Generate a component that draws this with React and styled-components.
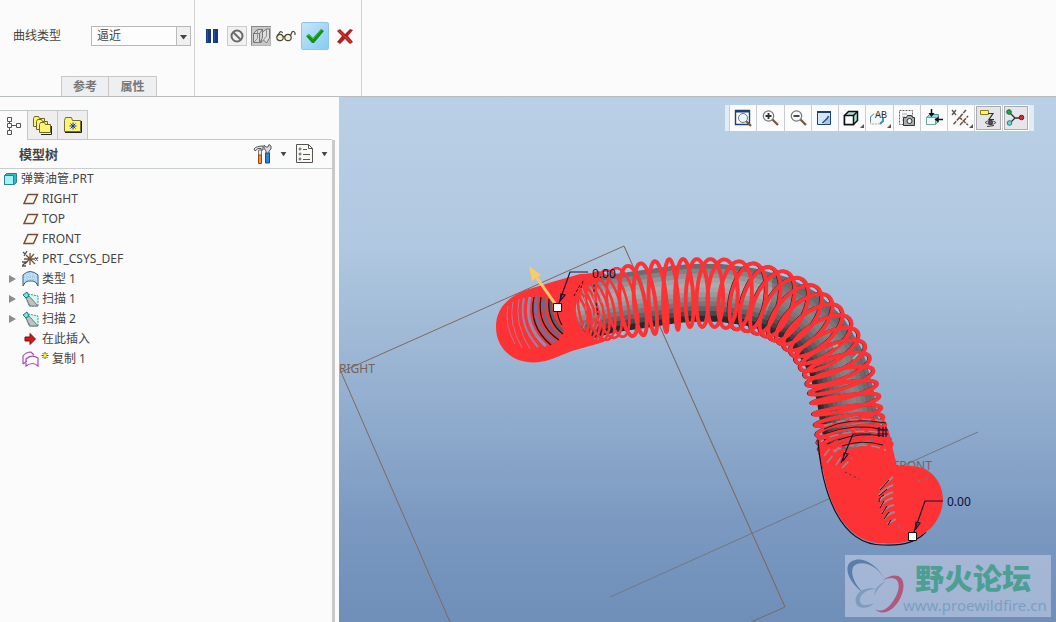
import React from 'react'
import styled, { createGlobalStyle, css } from 'styled-components'

const GlobalStyle = createGlobalStyle`
  *, *::before, *::after {
    box-sizing: border-box;
  }

  body {
    margin: 0;
    background: #fbfbfb;
    color: #444;
    font-family: 'Noto Sans', 'Noto Sans CJK SC', sans-serif;
    font-size: 12px;
    line-height: 20px;
  }

  button, select {
    color: inherit;
    font: inherit;
  }

  svg {
    display: block;
  }
`

const Page = styled.div`
  display: flex;
  flex-direction: column;
  min-height: 100vh;
`

/* dashboard */

const Dashboard = styled.header`
  display: flex;
  height: 97px;
  border-bottom: 1px solid #b9bcbc;
`

const Section = styled.section`
  display: flex;
  flex-direction: column;
  justify-content: space-between;
  border-right: 1px solid #d2d2d2;
`

const Field = styled.div`
  display: flex;
  align-items: center;
  gap: 30px;
  padding: 26px 3px 0 13px;
`

const SelectBox = styled.span`
  display: flex;
  position: relative;

  svg {
    position: absolute;
    top: 1px;
    right: 1px;
    pointer-events: none;
  }
`

const Select = styled.select`
  appearance: none;
  width: 100px;
  height: 20px;
  padding: 0 20px 0 5px;
  border: 1px solid #b8b8b8;
  border-radius: 0;
  background: #fdfdfd;
  line-height: 18px;
`

const SlideTabs = styled.nav`
  display: flex;
  padding-left: 61px;
`

const SlideTab = styled.button`
  width: 48px;
  height: 20px;
  padding: 0;
  border: 1px solid #c6c8ca;
  border-bottom: 0;
  background: #eeeff1;
  color: #76787a;
  font-weight: 700;
  line-height: 18px;

  & + & {
    border-left-width: 0;
  }
`

const Actions = styled.div`
  display: flex;
  align-items: center;
  gap: 4px;
  padding: 22px 4px 0 6px;
`

const Action = styled.button`
  display: grid;
  place-items: center;
  width: ${({ $size }) => $size || 20}px;
  height: ${({ $size }) => $size || 20}px;
  padding: 0;
  border: 1px solid transparent;
  background: none;

  ${({ $look }) =>
    $look === 'raised' &&
    css`
      border-color: #cbcbcb;
      background: #f1f1f1;
    `}
  ${({ $look }) =>
    $look === 'pressed' &&
    css`
      border-color: #8a8a8a #b4b4b4 #b4b4b4 #8a8a8a;
      background: #c9c9c9;
    `}
  ${({ $look }) =>
    $look === 'hot' &&
    css`
      border-color: #8fc6e8;
      border-radius: 2px;
      background: linear-gradient(135deg, #c8e6f8, #86cbf5);
    `}
`

/* navigator */

const Workspace = styled.main`
  display: grid;
  flex: 1;
  grid-template-columns: 339px minmax(0, 1fr);
`

const Navigator = styled.aside`
  display: flex;
  flex-direction: column;
  padding: 13px 4px 0 0;
`

const NavTabs = styled.nav`
  display: flex;
  height: 30px;
  border-bottom: 1px solid #c5c8c8;
  margin-right: 3px;
`

const NavTab = styled.button`
  display: grid;
  place-items: center;
  width: ${({ $active }) => ($active ? 28 : 30)}px;
  height: ${({ $active }) => ($active ? 30 : 29)}px;
  padding: 0;
  border: 1px solid #c5c8c8;
  border-width: 1px 1px 0 0;
  background: ${({ $active }) => ($active ? '#fbfbfb' : '#eeeeef')};
`

const NavBody = styled.div`
  flex: 1;
  border-right: 3px solid #c9c9c9;
`

const TreeHeader = styled.div`
  display: flex;
  align-items: center;
  height: 29px;
  padding: 0 4px 0 19px;
  border-bottom: 1px solid #c8cdcd;
`

const TreeTitle = styled.h2`
  flex: 1;
  margin: 0;
  font-size: 13px;
  font-weight: 700;
`

const MenuButton = styled.button`
  display: flex;
  align-items: center;
  gap: 8px;
  padding: 0;
  margin-left: 9px;
  border: 0;
  background: none;
`

const Tree = styled.ul`
  margin: 0;
  padding: 0;
  list-style: none;
`

const TreeItem = styled.li`
  display: flex;
  align-items: center;
  gap: 3px;
  height: 20px;
  padding-left: ${({ $root }) => ($root ? 3 : 7)}px;
`

const Twisty = styled.span`
  width: 12px;
  color: #8d8d8d;
`

/* graphics area */

const Viewport = styled.section`
  position: relative;
  min-height: 525px;
  overflow: hidden;
  background: linear-gradient(#b9d0e6 0%, #b0c8e0 28%, #97b2d1 54%, #7a98c0 82%, #6f8fb8 100%);
`

const Scene = styled.svg`
  position: absolute;
  width: 100%;
  height: 100%;
`

const ViewBar = styled.div`
  position: absolute;
  top: 8px;
  right: 22px;
  display: flex;
  width: 309px;
  height: 26px;
  padding: 0 5px 0 4px;
  background: #e3ebf3;
`

const ViewButton = styled.button`
  display: grid;
  flex: 1;
  place-items: center;
  min-width: 0;
  height: 26px;
  padding: 0;
  border: 0;
  border-left: 1px solid #c9cdd2;
  background: #fcfcfc;

  ${({ $on }) =>
    $on &&
    css`
      background: #e4e6ea;
      box-shadow: inset 0 0 0 1px #fff, inset 0 0 0 2px #a9abb0;
    `}
`

const Watermark = styled.a`
  position: absolute;
  right: 5px;
  bottom: 5px;
  display: flex;
  align-items: center;
  width: 206px;
  height: 62px;
  background: rgba(190, 200, 226, 0.66);
  color: #789fc0;
  text-decoration: none;
`

const WatermarkText = styled.span`
  display: flex;
  flex-direction: column;
  margin-left: -4px;
  font-size: 15px;
  line-height: 18px;

  strong {
    padding-left: 12px;
    color: #4d9f93;
    font-family: 'Noto Sans CJK SC', sans-serif;
    font-size: 29px;
    font-weight: 900;
    line-height: 38px;
  }
`

/* icons */

const Caret = () => (
  <svg width="7" height="5" viewBox="0 0 7 5">
    <path d="M1 0h5L3.500 4z" fill="#444" stroke="#444" strokeWidth=".5" />
  </svg>
)

const PauseIcon = () => (
  <svg width="12" height="14" viewBox="0 0 12 14">
    <path d="M0 0h5v14H0zM7 0h5v14H7z" fill="#163a80" />
    <path d="M1 1h1v12H1zM8 1h1v12H8z" fill="#2c539a" />
  </svg>
)

const NoneIcon = () => (
  <svg width="14" height="14" viewBox="0 0 14 14" fill="none" stroke="#6a6a6a" strokeWidth="2">
    <circle cx="7" cy="7" r="5.500" />
    <path d="M3.500 3.500l7 7" />
  </svg>
)

const AttachedIcon = () => (
  <svg width="18" height="18" viewBox="0 0 18 18" fill="none" stroke="#777">
    <path d="M1.500 6.500l4-4h5l-3 4v9h-6zM7.500 6.500h-6M7.500 15.500l3-4v-9" fill="#d9d9d9" />
    <path d="M10.500 5l4-3h3v9l-3 5-3-3-3 3 2-6z" fill="#dedede" />
    <path d="M5.500 2.500v9l-4 4M14.500 2v7l-3 4" stroke="#929292" />
  </svg>
)

const GlassesIcon = () => (
  <svg width="20" height="12" viewBox="0 0 20 12" fill="none" stroke="#4a4638" strokeWidth="1.200">
    <circle cx="4" cy="7.500" r="3.200" fill="#f6f1dc" />
    <circle cx="12" cy="7.500" r="3.200" fill="#f6f1dc" />
    <path d="M7 7q1-1.500 2 0M1 6.500L4 2q1.500-1 2.500 1M14.500 5.500L16 2q2-1.500 3 1v2" />
  </svg>
)

const CheckIcon = () => (
  <svg width="18" height="14" viewBox="0 0 18 14">
    <path d="M0 7l3-2 4 4 8-9 3 2L8 14H6z" fill="#12921c" />
    <path d="M1 7l2-1 4 4 8-9" fill="none" stroke="#3dbb3d" />
  </svg>
)

const CancelIcon = () => (
  <svg width="16" height="15" viewBox="0 0 16 15">
    <path d="M0 2l3-2 5 5 5-5 3 1-5 6 5 6-3 2-5-5-5 5-3-2 5-6z" fill="#b3201c" />
    <path d="M2 2l12 11" stroke="#dc4a3d" />
  </svg>
)

const StructureIcon = () => (
  <svg width="14" height="20" viewBox="0 0 14 20" fill="none" stroke="#555">
    <path d="M.5 1.500h4v4h-4zM.5 7.500h4v4h-4zM.5 14.500h4v4h-4zM9.500 7.500h4v4h-4zM2.500 5.500v2M2.500 11.500v3M4.500 9.500h5" />
  </svg>
)

const FoldersIcon = () => (
  <svg width="19" height="20" viewBox="0 0 19 20" fill="#fdf47a" stroke="#6e6624">
    {[0, 3, 6].map((d) => (
      <path key={d} d="M.5 2.500l1-2h4l1 2h5v8H.5z" transform={`translate(${d} ${d + 1})`} />
    ))}
    <path d="M18.500 11v8.500H8" fill="none" stroke="#222" />
  </svg>
)

const FavoriteIcon = () => (
  <svg width="18" height="16" viewBox="0 0 18 16">
    <path d="M.5 3.500l1-3h6l1 3h8v11H.5z" fill="#fdf47a" stroke="#77702c" />
    <path d="M17.500 4v11.500H1" fill="none" stroke="#222" />
    <path d="M9 5.500v7M5.500 9h7M6.500 6.500l5 5M11.500 6.500l-5 5" stroke="#1b3aa0" />
  </svg>
)

const ToolsIcon = () => (
  <svg width="19" height="20" viewBox="0 0 19 20">
    <path d="M1 5q2-3 9-3v4H8V4.500H5L2 7z" fill="#d4e2e8" stroke="#555" />
    <path d="M5.500 6h3v6h-3z" fill="#e8e8e8" stroke="#777" />
    <path d="M5.500 11h3v8.500h-3z" fill="#f0953a" stroke="#8b4a18" />
    <path d="M11 4V1l2 2h2l1-2.500L18 2v3l-2 2v3h-3V7z" fill="#d5dde2" stroke="#555" />
    <path d="M12.500 9h4v10h-4z" fill="#2f83d0" stroke="#174b8a" />
  </svg>
)

const SettingsListIcon = () => (
  <svg width="17" height="20" viewBox="0 0 17 20" fill="none" stroke="#555">
    <path d="M.5.5h12l4 4v14H.5zM12.500.5v4h4" fill="#fbfbf4" />
    <circle cx="4" cy="5" r="1" />
    <circle cx="4" cy="10" r="1" />
    <circle cx="4" cy="15" r="1" />
    <path d="M7 5.500h4M7 10.500h7M7 15.500h7" />
  </svg>
)

const PartIcon = () => (
  <svg width="15" height="14" viewBox="0 0 15 14" stroke="#347f8a">
    <path d="M1.500 3.500l2-2h10v9l-2 2h-10z" fill="#36b5c0" />
    <path d="M1.500 3.500h9v9h-9z" fill="#9cf6f8" />
  </svg>
)

const PlaneIcon = () => (
  <svg width="17" height="12" viewBox="0 0 17 12">
    <path d="M6 1.500h9.500l-4 9H2z" fill="#fffaf0" stroke="#7a4c35" strokeWidth="1.500" />
  </svg>
)

const CsysIcon = () => (
  <svg width="17" height="16" viewBox="0 0 17 16" fill="none" stroke="#7a5038" strokeWidth="1.300">
    <path d="M2 8h11M8 2v12M4 4l9 9M12 3l-9 10" />
    <path d="M13 6.500l3 3M16 6.500l-3 3M1 1l2 2M5 0L2 5M0 11h4l-4 4h4" stroke="#555" />
  </svg>
)

const QuiltIcon = () => (
  <svg width="17" height="16" viewBox="0 0 17 16">
    <path d="M1 4q7-7 15 0v11q-2-5-5-5H6q-3 0-5 5z" fill="#bfe1fa" stroke="#39577a" />
    <path d="M5 3v7M8 2v8M11 2v8M2 6h13M3 9h11" stroke="#8fbfe6" strokeDasharray="1 1" />
  </svg>
)

const SweepIcon = () => (
  <svg width="17" height="16" viewBox="0 0 17 16" strokeLinejoin="round">
    <path d="M6 3l10 2v10H7L4 7z" fill="#d5f7f2" stroke="#4c8a86" strokeDasharray="2 1" />
    <path d="M4 7l3-2 9 10H8z" fill="#bdc3c3" stroke="#777" />
    <path d="M1 4l4-3 2 4-3 2z" fill="#70e7d8" stroke="#16847d" />
  </svg>
)

const InsertIcon = () => (
  <svg width="17" height="14" viewBox="0 0 17 14">
    <path d="M3 5h5V1.500L13.500 7 8 12.500V9H3z" fill="#cc1919" stroke="#7c1111" />
  </svg>
)

const CopyIcon = () => (
  <svg width="27" height="16" viewBox="0 0 27 16" fill="none">
    <path d="M1 13V5q3-4 8-4l3 3M1 13l4-3M4 15V8q5-5 12-1v8q-5-5-12 0z" stroke="#a34bc0" strokeWidth="1.200" />
    <path d="M23 1v7M19.500 4.500h7M20.500 2l5 5M25.500 2l-5 5" stroke="#55551a" />
    <path d="M21.500 3h3v3h-3z" fill="#f5ee1c" />
  </svg>
)

const ViewIcon = ({ children, more }) => (
  <svg width="26" height="26" viewBox="0 0 26 26" fill="none" stroke="#333">
    {children}
    {more && <path d="M25 19v4h-4z" fill="#555" stroke="none" />}
  </svg>
)

const Magnifier = ({ sign }) => (
  <>
    <path d="M15 14l6 6" stroke="#79543f" strokeWidth="2.200" />
    <circle cx="11.500" cy="11" r="5.200" fill="#f7fafc" stroke="#777" strokeWidth="1.200" />
    {sign && <path d={sign} strokeWidth="1.800" />}
  </>
)

const viewTools = [
  {
    name: 'Refit',
    icon: (
      <>
        <path d="M5.500 5.500h14v14h-14z" stroke="#1c4172" strokeWidth="1.400" />
        <path d="M5 6.500h15" stroke="#1c4172" strokeWidth="2" />
        <path d="M16 16l5 5" stroke="#79543f" strokeWidth="2.200" />
        <circle cx="13" cy="13" r="4.500" fill="#eef4fa" stroke="#777" />
      </>
    ),
  },
  { name: 'Zoom in', icon: <Magnifier sign="M8.500 11h6M11.500 8v6" /> },
  { name: 'Zoom out', icon: <Magnifier sign="M8.500 11h6" /> },
  {
    name: 'Repaint',
    icon: (
      <>
        <path d="M5.500 6.500h13v13h-13z" fill="#d3e7f8" stroke="#1c4172" />
        <path d="M5 7h14" stroke="#1c4172" strokeWidth="2" />
        <path d="M18 11q-4 2-6 8h6z" fill="#a5c8ea" stroke="none" />
        <path d="M16.500 11q-1 3-4 5l-2 2" stroke="#344c72" strokeWidth="1.500" />
      </>
    ),
  },
  {
    name: 'Display style',
    more: true,
    icon: (
      <>
        <path d="M5.500 10.500l4-4h9v9l-4 4h-9z" fill="#a9dfd6" stroke="#111" strokeWidth="1.500" />
        <path d="M5.500 10.500h9v9h-9z" fill="#fff" stroke="#111" strokeWidth="1.500" />
        <path d="M14.500 10.500l4-4" stroke="#111" strokeWidth="1.500" />
      </>
    ),
  },
  {
    name: 'Saved orientations',
    more: true,
    icon: (
      <>
        <path d="M4.500 12l3-3h9v6l-3 4h-9z" fill="#f4f7f8" stroke="#aaa" strokeDasharray="2 1" />
        <path d="M14 19l3-3v-3" stroke="#3a9ca2" strokeWidth="2" />
        <path d="M4.500 17v-5l3-3" stroke="#5d8d90" />
        <text x="9" y="13" fill="#333" stroke="none" fontSize="10" fontFamily="Liberation Mono, monospace">
          AB
        </text>
      </>
    ),
  },
  {
    name: 'View manager',
    icon: (
      <>
        <path d="M5.500 5.500h13v14h-13z" fill="#f7f7f7" strokeDasharray="2 1" stroke="#666" />
        <path d="M8 9h5M8 12h3M8 15h2" stroke="#aaa" />
        <path d="M9.500 12.500h3l1-2h4l1 2h2v8h-11z" fill="#a8adaf" />
        <circle cx="15.500" cy="16" r="2.500" fill="#f1f1f1" />
      </>
    ),
  },
  {
    name: 'View normal',
    icon: (
      <>
        <path d="M5.500 12.500l3-3h9v7l-3 3h-9z" fill="#8fdcdc" stroke="#528e91" />
        <path d="M5.500 12.500h9v7h-9z" fill="#eef9f7" stroke="#6fa5a5" />
        <path d="M10.500 4v6M22 14.500h-6" stroke="#111" strokeWidth="1.500" />
        <path d="M7.500 8h6l-3 4zM17.500 11.500v6l-4-3z" fill="#111" stroke="none" />
      </>
    ),
  },
  {
    name: 'Datum display',
    more: true,
    icon: (
      <>
        <path d="M4 5l4 5M8 5l-4 5" stroke="#555" strokeWidth="1.300" />
        <path d="M18 5L5 20M11 12l9 8M12 20l8-9" stroke="#6f5140" strokeWidth="1.500" strokeDasharray="4 1" />
      </>
    ),
  },
  {
    name: 'Annotation display',
    on: true,
    icon: (
      <>
        <path d="M4.500 5.500h8v4h-8z" fill="#fff46a" stroke="#8c8022" />
        <path d="M12 8.500h5l-4 6h5" stroke="#333" strokeWidth="1.200" />
        <path d="M9 17.500q5-4 11 0-5 4-11 0z" fill="#ddd" stroke="#555" />
        <circle cx="14.500" cy="17.500" r="2" fill="#555" />
        <path d="M11 21.500l7-1" />
      </>
    ),
  },
  {
    name: 'Spin center',
    on: true,
    icon: (
      <>
        <path d="M6 7l6 6h7M12 13l-5 5" stroke="#333" strokeWidth="1.300" />
        <circle cx="6" cy="7" r="2.300" fill="#22a447" stroke="#126c2c" />
        <circle cx="18.500" cy="12.500" r="2.300" fill="#d12b2b" stroke="#811" />
        <circle cx="6.500" cy="18" r="2.300" fill="#57dde0" stroke="#247d86" />
      </>
    ),
  },
]

const treeItems = [
  { name: 'RIGHT', icon: <PlaneIcon /> },
  { name: 'TOP', icon: <PlaneIcon /> },
  { name: 'FRONT', icon: <PlaneIcon /> },
  { name: 'PRT_CSYS_DEF', icon: <CsysIcon /> },
  { name: '类型 1', icon: <QuiltIcon />, nested: true },
  { name: '扫描 1', icon: <SweepIcon />, nested: true },
  { name: '扫描 2', icon: <SweepIcon />, nested: true },
  { name: '在此插入', icon: <InsertIcon /> },
  { name: '复制 1', icon: <CopyIcon /> },
]

/* hose model: x, y, direction, coil radius, coil tilt, pitch */
const spine = [
  [566, 316, -16, 34, 0.6, 4],
  [588, 310, -14, 34, 0.5, 6],
  [610, 304, -12, 34, 0.4, 9],
  [645, 299, -7, 36, 0.2, 13],
  [672, 295, -2, 36, 0.1, 13],
  [690, 293, 0, 34, 0.2, 13],
  [720, 293, 3, 34, 0.34, 13],
  [750, 297, 12, 34, 0.42, 13],
  [776, 304, 24, 34, 0.46, 13],
  [800, 316, 40, 34, 0.48, 12],
  [820, 335, 54, 34, 0.42, 12],
  [836, 362, 68, 34, 0.3, 11],
  [845, 395, 79, 34, 0.12, 12],
  [848, 415, 80, 34, 0.14, 11],
  [853, 440, 77, 35, 0.3, 6],
  [858, 456, 73, 36, 0.34, 4],
]

const stations = []
let turn = 0
spine.slice(1).forEach((end, i) => {
  const start = spine[i]
  const length = Math.hypot(end[0] - start[0], end[1] - start[1])
  const steps = Math.ceil(length * 3)
  for (let n = 0; n < steps; n += 1) {
    const [x, y, deg, r, tilt, pitch] = start.map((v, k) => v + ((end[k] - v) * n) / steps)
    const a = (deg * Math.PI) / 180
    turn += ((length / steps) * 2 * Math.PI) / pitch
    stations.push({ x, y, r, tilt, turn, tx: Math.cos(a), ty: Math.sin(a) })
  }
})

const toPath = (points) =>
  'M' + points.map(([x, y]) => `${x.toFixed(1)} ${y.toFixed(1)}`).join('L')

const coilPath = (list) =>
  toPath(
    list.map(({ x, y, r, tilt, turn: t, tx, ty }) => {
      const across = r * Math.cos(t)
      const along = r * tilt * Math.sin(t)
      return [x + ty * across + tx * along, y - tx * across + ty * along]
    })
  )

const denseCoil = coilPath(stations.filter(({ x }) => x < 626))
const openCoil = coilPath(stations.filter(({ x }) => x >= 625))
const shadedCoil = coilPath(stations.filter(({ x }) => x > 740))

const tubeShades = ['#6b6b70', '#838387', '#949498', '#a3a3a7', '#acacaf', '#a5a5a8', '#99999c', '#89898c', '#77777a', '#626265', '#49494c', '#29292c']
const tube = tubeShades.map((shade, i) => {
  const offset = 26 - i * 4.7
  return { shade, d: toPath(stations.map(({ x, y, tx, ty }) => [x + ty * offset, y - tx * offset])) }
})

const Hose = () => (
  <g fill="none" strokeLinejoin="round">
    {tube.map(({ shade, d }) => (
      <path key={shade} d={d} stroke={shade} strokeWidth="6" />
    ))}
    <path
      d={toPath(stations.filter(({ x }) => x > 770).map(({ x, y }) => [x, y]))}
      stroke="#3c3c40"
      strokeOpacity="0.35"
      strokeWidth="50"
    />
    <path d={shadedCoil} stroke="#1d1420" strokeWidth="3" transform="translate(-1 0)" />
    <path d={denseCoil} stroke="#fd3234" strokeWidth="2.600" />
    <path d={openCoil} stroke="#fd3234" strokeWidth="3.900" />

    <path
      d="M496 327C496 308 508 297 526 290L552 282 580 274 604 273 600 279Q574 292 576 312T600 343L572 351 552 359C521 370 496 353 496 327z"
      fill="#fd3234"
    />
    <g strokeWidth="3">
      <path d="M508 306q-4 18 7 38M513 302q-5 21 9 46M519 299q-5 25 11 50" stroke="#c5718e" strokeWidth="1" />
      <path d="M524 298q-6 27 14 49" stroke="#9386ad" strokeWidth="2" />
      <path d="M530 297q-7 29 16 49" stroke="#8a8fb5" />
      <path d="M537 296q-7 29 18 46" stroke="#6a7299" />
      <path d="M544 298q-3 25 16 39" stroke="#626b88" />
      <path d="M550 301q-1 19 13 31" stroke="#606064" strokeWidth="4" />
      <path d="M534 297q-6 29 17 48M541 297q-5 28 18 43M549 299q-2 23 14 35M557 310q1 9 5 15" stroke="#18141e" strokeWidth="1.200" />
    </g>
    <path
      d="M582 288q8 24 0 44M591 287q9 25 0 45M599 289q6 22-3 40"
      stroke="#a48e9a"
      strokeDasharray="5 4"
    />
    <path d="M580 285l-6 11M583 281l-2 7M594 284v8M596 303l2 12" stroke="#201420" strokeDasharray="3 2" />

    <path
      d="M818 440C822 493 840 546 884 545 907 546 918 540 926 532"
      stroke="#141019"
      strokeWidth="1.200"
    />
    <path
      d="M820 442C822 493 842 545 884 543C907 546 923 535 931 528C950 507 945 480 925 469Q912 464 897 466L888 430Q855 460 820 442z"
      fill="#fd3234"
    />
    <path
      d="M824 429q26-13 62-6M824 434q31-12 61-4M838 440q22-8 46-4M842 446q20-7 41-1"
      stroke="#26161f"
    />
    <path
      d="M824 426q27-10 58-5M833 451q27-11 53-1M830 437q25-9 52-4M824 456l7-9M827 463l12-16M836 465l9-14M842 468l10-10"
      stroke="#9f858e"
      strokeWidth="1.500"
      strokeDasharray="9 4"
    />
    <path d="M845 472l14 7" stroke="#6a2630" strokeDasharray="2 3" />
    <path d="M880 489q6-6 13-12M879 495q5-6 14-10M879 501q5-6 14-9M880 507q5-7 13-9M882 513q5-7 12-8M884 519q5-6 11-7M887 524l9-5" stroke="#a7858f" strokeWidth="2" />
    <path d="M880 490l9-10M879 496l8-7M879 502q0-5 5-7M880 508l4-7M882 514l5-8M884 519l5-7M888 525l3-5" stroke="#17101b" />
    <path d="M898 526l9 7M918 481h2l8-3" stroke="#99707c" strokeDasharray="2 2" />
    <path d="M833 347l5-2M858 354l-5 5" stroke="#61c7b5" strokeWidth="2" />
  </g>
)

const ModelScene = () => (
  <Scene viewBox="339 97 717 525" preserveAspectRatio="xMinYMin slice" aria-label="弹簧油管">
    <g fill="none" stroke="#7d6a5e">
      <path d="M450 622L341 372 624 246 785 607 751 622" />
      <path d="M610 597L978 432" stroke="#73777f" />
    </g>
    <g fill="#76625a" fontSize="12">
      <text x="339" y="373">RIGHT</text>
      <text x="893" y="470">FRONT</text>
    </g>
    <Hose />
    <path d="M624 246L785 607" fill="none" stroke="#776c66" strokeOpacity="0.4" />

    <path d="M556 305L537 278" stroke="#f9cb69" strokeWidth="3" />
    <path d="M529 266l12 9-9 6z" fill="#f9cb69" />
    <g fill="none" stroke="#17143a" strokeWidth="1.200">
      <path d="M559 303l11-31h18M560 301l1-7 4 1zM914 532l11-31h18M915 530l1-8 4 1zM841 463l12-29h18M843 461l1-8 4 1z" />
      <path d="M877 430h11M877 434h11M879 427v10M883 427v10M886 427v10" />
    </g>
    <g fill="#0d0c35" fontSize="12">
      <text x="592" y="278">0.00</text>
      <text x="947" y="506">0.00</text>
    </g>
    <path d="M553.500 303.500h8v8h-8zM908.500 532.500h8v8h-8z" fill="#fff" stroke="#111" />
  </Scene>
)

const Logo = () => (
  <svg width="62" height="62" viewBox="0 0 62 62">
    <path d="M20 39C4 29-3 11 7 6 18 0 36 12 40 27 35 12 21 6 12 9 3 12 7 28 20 39z" fill="#587eab" />
    <path d="M38 25C50 16 63 20 57 39 51 56 37 62 30 54 39 60 49 48 53 36 56 24 49 20 38 25z" fill="#b1587d" />
    <path d="M32 34C16 30 7 42 12 50 15 54 24 54 29 48 20 52 14 50 15 44 16 38 23 34 32 34z" fill="#7e9cbc" />
    <path d="M29 41Q30 30 41 26 33 32 29 41z" fill="#7e9cbc" />
  </svg>
)

const App = () => (
  <Page>
    <GlobalStyle />
    <Dashboard>
      <Section>
        <Field>
          <label htmlFor="curve-type">曲线类型</label>
          <SelectBox>
            <Select id="curve-type" defaultValue="approximate">
              <option value="approximate">逼近</option>
            </Select>
            <svg width="14" height="18" viewBox="0 0 14 18">
              <path d="M0 0h14v18H0z" fill="#f0f0f1" />
              <path d="M.5 0v18" stroke="#bbb" />
              <path d="M4 8h7l-3.500 4.500z" fill="#444" />
            </svg>
          </SelectBox>
        </Field>
        <SlideTabs>
          <SlideTab>参考</SlideTab>
          <SlideTab>属性</SlideTab>
        </SlideTabs>
      </Section>
      <Section>
        <Actions>
          <Action aria-label="Pause" $size={22}><PauseIcon /></Action>
          <Action aria-label="No preview" $look="raised"><NoneIcon /></Action>
          <Action aria-label="Attached preview" $look="pressed"><AttachedIcon /></Action>
          <Action aria-label="Verify" $size={22}><GlassesIcon /></Action>
          <Action aria-label="OK" $size={28} $look="hot"><CheckIcon /></Action>
          <Action aria-label="Cancel" $size={24}><CancelIcon /></Action>
        </Actions>
      </Section>
    </Dashboard>

    <Workspace>
      <Navigator>
        <NavTabs>
          <NavTab $active aria-label="Model tree"><StructureIcon /></NavTab>
          <NavTab aria-label="Folder browser"><FoldersIcon /></NavTab>
          <NavTab aria-label="Favorites"><FavoriteIcon /></NavTab>
        </NavTabs>
        <NavBody>
          <TreeHeader>
            <TreeTitle>模型树</TreeTitle>
            <MenuButton aria-label="Settings"><ToolsIcon /><Caret /></MenuButton>
            <MenuButton aria-label="Show"><SettingsListIcon /><Caret /></MenuButton>
          </TreeHeader>
          <Tree>
            <TreeItem $root><PartIcon />弹簧油管.PRT</TreeItem>
            {treeItems.map(({ name, icon, nested }) => (
              <TreeItem key={name}>
                <Twisty>
                  {nested && (
                    <svg width="9" height="10" viewBox="0 0 9 10">
                      <path d="M2 1l7 4-7 4z" fill="currentColor" />
                    </svg>
                  )}
                </Twisty>
                {icon}
                {name}
              </TreeItem>
            ))}
          </Tree>
        </NavBody>
      </Navigator>

      <Viewport>
        <ModelScene />
        <ViewBar role="toolbar" aria-label="Graphics">
          {viewTools.map(({ name, icon, more, on }) => (
            <ViewButton key={name} aria-label={name} $on={on}>
              <ViewIcon more={more}>{icon}</ViewIcon>
            </ViewButton>
          ))}
        </ViewBar>
        <Watermark href="#forum">
          <Logo />
          <WatermarkText>
            <strong>野火论坛</strong>
            <span>www.proewildfire.cn</span>
          </WatermarkText>
        </Watermark>
      </Viewport>
    </Workspace>
  </Page>
)

export default App
